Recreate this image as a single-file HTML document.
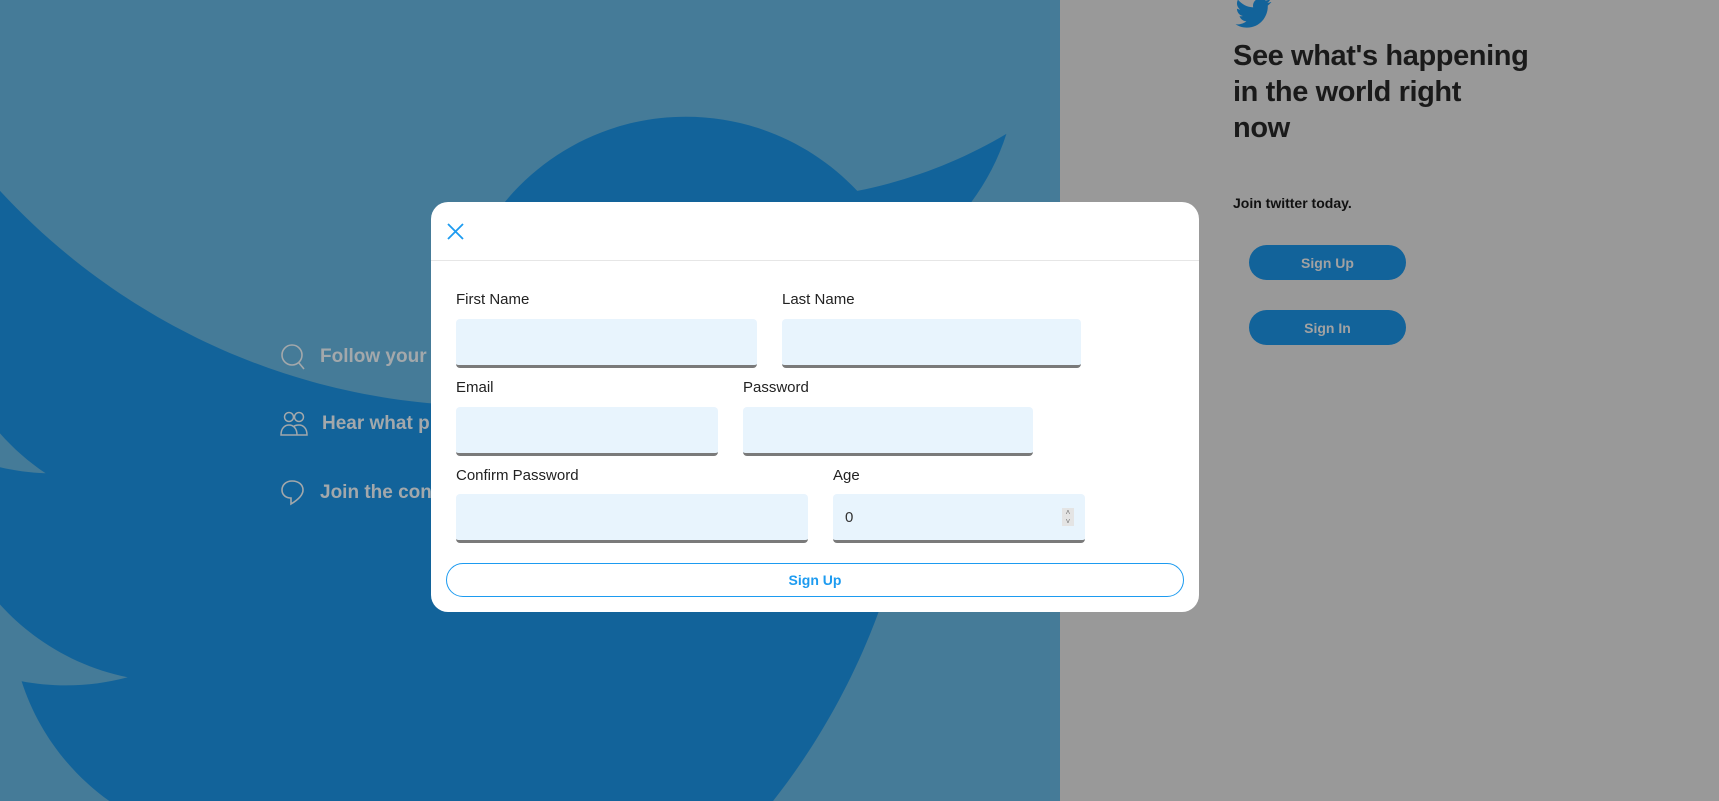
<!DOCTYPE html>
<html><head><meta charset="utf-8"><style>
*{box-sizing:border-box;margin:0;padding:0}
html,body{width:1719px;height:801px;overflow:hidden}
body{position:relative;font-family:"Liberation Sans",sans-serif;background:#999}
.left{position:absolute;left:0;top:0;width:1060px;height:801px;background:#457b98;overflow:hidden}
.feat{position:absolute;left:280px;font-weight:bold;font-size:19px;color:#a3a8ab;display:flex;align-items:center}
.feat svg{margin-right:14px}
h1{position:absolute;left:1233px;top:38px;white-space:nowrap;font-size:29px;letter-spacing:-0.4px;line-height:36px;color:#1a1a1a;font-weight:bold}
.join{position:absolute;left:1233px;top:195px;font-size:14px;font-weight:bold;color:#111}
.rb{position:absolute;left:1249px;width:157px;height:35px;border-radius:18px;background:#12639a;color:#a2a2a2;font-weight:bold;font-size:14px;display:flex;align-items:center;justify-content:center}
.modal{position:absolute;left:431px;top:202px;width:768px;height:410px;background:#fff;border-radius:17px}
.hdr{height:59px;border-bottom:1px solid #e6e6e6;position:relative}
.lbl{position:absolute;font-size:15px;color:#222}
.inp{position:absolute;height:49px;background:#e8f4fd;border-radius:4px;border-bottom:3px solid #7a7a7a}
.btn{position:absolute;left:15px;top:361px;width:738px;height:34px;border:1px solid #1d9bf0;border-radius:17px;color:#1d9bf0;font-weight:bold;font-size:14px;display:flex;align-items:center;justify-content:center}
</style></head><body>
<div class="left">
<svg viewBox="0 0 24 24" style="position:absolute;left:-154px;top:-22px;width:1210px;height:1210px"><path fill="#12639a" d="M23.643 4.937c-.835.37-1.732.62-2.675.733.962-.576 1.7-1.49 2.048-2.578-.9.534-1.897.922-2.958 1.13-.85-.904-2.06-1.47-3.4-1.470-2.572 0-4.658 2.086-4.658 4.660 0 .364.042.718.12 1.060-3.873-.195-7.304-2.050-9.602-4.868-.4.69-.63 1.490-.63 2.342 0 1.616.823 3.043 2.072 3.878-.764-.025-1.482-.234-2.110-.583v.06c0 2.257 1.605 4.140 3.737 4.568-.392.106-.803.162-1.227.162-.3 0-.593-.028-.877-.082.593 1.850 2.313 3.198 4.352 3.234-1.595 1.250-3.604 1.995-5.786 1.995-.376 0-.747-.022-1.112-.065 2.062 1.323 4.510 2.093 7.140 2.093 8.570 0 13.255-7.098 13.255-13.254 0-.2-.005-.402-.014-.602.910-.658 1.700-1.477 2.323-2.410z"/></svg>
<div class="feat" style="top:343px"><svg width="26" height="28" viewBox="0 0 26 28" fill="none" stroke="#a3a8ab" stroke-width="1.6"><circle cx="12" cy="12" r="10"/><path d="M19 20l5 6"/></svg>Follow your</div>
<div class="feat" style="top:411px"><svg width="28" height="26" viewBox="0 0 28 26" fill="none" stroke="#a3a8ab" stroke-width="1.5"><circle cx="9" cy="6" r="4.5"/><circle cx="19" cy="6" r="4.5"/><path d="M1 24c0-7 4-10 8-10s8 3 8 10zM13 16c1.5-1.5 3.5-2 6-2 4 0 8 3 8 10H17"/></svg>Hear what p</div>
<div class="feat" style="top:479px"><svg width="26" height="28" viewBox="0 0 26 28" fill="none" stroke="#a3a8ab" stroke-width="1.6"><path d="M12 2C6 2 2 6 2 11c0 5 4 8 9 8l0 6c5-3 12-8 12-14 0-5-4-9-11-9z"/></svg>Join the con</div>
</div>
<svg style="position:absolute;left:1233px;top:-6px" width="40" height="38" viewBox="0 0 24 24"><path fill="#12639a" d="M23.643 4.937c-.835.37-1.732.62-2.675.733.962-.576 1.7-1.49 2.048-2.578-.9.534-1.897.922-2.958 1.130-.85-.904-2.06-1.47-3.4-1.47-2.572 0-4.658 2.086-4.658 4.66 0 .364.042.718.12 1.06-3.873-.195-7.304-2.05-9.602-4.868-.4.69-.63 1.49-.63 2.342 0 1.616.823 3.043 2.072 3.878-.764-.025-1.482-.234-2.11-.583v.06c0 2.257 1.605 4.14 3.737 4.568-.392.106-.803.162-1.227.162-.3 0-.593-.028-.877-.082.593 1.85 2.313 3.198 4.352 3.234-1.595 1.25-3.604 1.995-5.786 1.995-.376 0-.747-.022-1.112-.065 2.062 1.323 4.51 2.093 7.14 2.093 8.57 0 13.255-7.098 13.255-13.254 0-.2-.005-.402-.014-.602.91-.658 1.7-1.477 2.323-2.41z"/></svg>
<h1>See what's happening<br>in the world right<br>now</h1>
<div class="join">Join twitter today.</div>
<div class="rb" style="top:245px">Sign Up</div>
<div class="rb" style="top:310px">Sign In</div>
<div class="modal">
<div class="hdr"><svg style="position:absolute;left:16px;top:21px" width="17" height="17" viewBox="0 0 17 17" stroke="#1d9bf0" stroke-width="1.8"><path d="M1 1l15 15M16 1L1 16"/></svg></div>
<div class="lbl" style="left:25px;top:89px">First Name</div>
<div class="lbl" style="left:351px;top:89px">Last Name</div>
<div class="inp" style="left:25px;top:117px;width:301px"></div>
<div class="inp" style="left:351px;top:117px;width:299px"></div>
<div class="lbl" style="left:25px;top:177px">Email</div>
<div class="lbl" style="left:312px;top:177px">Password</div>
<div class="inp" style="left:25px;top:205px;width:262px"></div>
<div class="inp" style="left:312px;top:205px;width:290px"></div>
<div class="lbl" style="left:25px;top:265px">Confirm Password</div>
<div class="lbl" style="left:402px;top:265px">Age</div>
<div class="inp" style="left:25px;top:292px;width:352px"></div>
<div class="inp" style="left:402px;top:292px;width:252px;font-size:15px;color:#333;padding:15px 12px">0<div style="position:absolute;right:11px;top:14px;width:12px;height:18px;background:#e4e4e4;font-size:8px;line-height:9px;text-align:center;color:#777">˄<br>˅</div></div>
<div class="btn">Sign Up</div>
</div>
</body></html>
